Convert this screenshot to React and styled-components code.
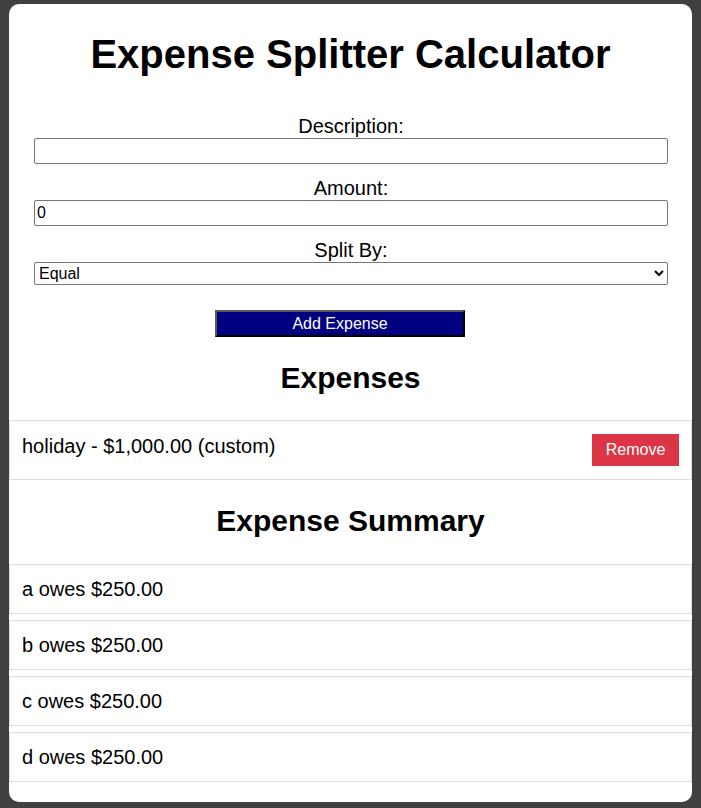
import React, { useState } from "react";
import styled, { createGlobalStyle } from "styled-components";

const GlobalStyle = createGlobalStyle`
  html, body {
    margin: 0;
    padding: 0;
    background: #404040;
    font-family: "Liberation Sans", Arial, sans-serif;
  }
  #root {
    padding: 4px 9px 5px;
  }
`;

const Card = styled.div`
  background: #fff;
  border-radius: 10px;
  padding: 27px 0 20px;
  color: #000;
`;

const Title = styled.h1`
  margin: 0;
  font-size: 40px;
  line-height: 46px;
  font-weight: bold;
  text-align: center;
`;

const Form = styled.form`
  margin: 37px 0 0;
  padding: 0 24px 0 25px;
  display: flex;
  flex-direction: column;
  align-items: stretch;
`;

const Label = styled.label`
  display: block;
  text-align: center;
  font-size: 20px;
  line-height: 24px;
`;

const Input = styled.input`
  box-sizing: border-box;
  width: 100%;
  height: 26px;
  margin: 0 0 12px;
  padding: 0 2px;
  border: 1px solid #767676;
  border-radius: 2px;
  font-family: "Liberation Sans", Arial, sans-serif;
  font-size: 16px;
  color: #000;
  background: #fff;
`;

const Select = styled.select`
  box-sizing: border-box;
  width: 100%;
  height: 23px;
  margin: 0;
  border: 1px solid #767676;
  border-radius: 2px;
  font-family: "Liberation Sans", Arial, sans-serif;
  font-size: 16px;
  color: #000;
  background: #fff;
`;

const AddButton = styled.button`
  box-sizing: border-box;
  align-self: center;
  width: 250px;
  height: 27px;
  margin: 25px 0 0 -22px;
  padding: 0;
  background: #000080;
  color: #fff;
  font-family: "Liberation Sans", Arial, sans-serif;
  font-size: 16px;
  border-style: solid;
  border-width: 2px;
  border-color: #5a5a5a #000 #000 #5a5a5a;
  cursor: pointer;
`;

const SectionTitle = styled.h2`
  margin: ${(p) => p.$top}px 0 0;
  font-size: 30px;
  line-height: 34px;
  font-weight: bold;
  text-align: center;
`;

const List = styled.ul`
  list-style: none;
  margin: ${(p) => p.$top}px 0 0;
  padding: 0;
  display: flex;
  flex-direction: column;
  gap: 6px;
`;

const Row = styled.li`
  display: flex;
  justify-content: space-between;
  align-items: flex-start;
  padding: ${(p) => (p.$tall ? "13px 12px" : "12px 12px")};
  border: 1px solid #ddd;
  font-size: 20px;
  line-height: 24px;
`;

const RemoveButton = styled.button`
  width: 87px;
  height: 32px;
  padding: 0;
  border: none;
  background: #dc3545;
  color: #fff;
  font-family: "Liberation Sans", Arial, sans-serif;
  font-size: 16px;
  cursor: pointer;
`;

const fmt = (n) =>
  "$" + n.toLocaleString("en-US", { minimumFractionDigits: 2, maximumFractionDigits: 2 });

export default function App() {
  const [expenses, setExpenses] = useState([
    { description: "holiday", amount: 1000, split: "custom" },
  ]);
  const people = ["a", "b", "c", "d"];
  const total = expenses.reduce((s, e) => s + e.amount, 0);

  return (
    <>
      <GlobalStyle />
      <Card>
        <Title>Expense Splitter Calculator</Title>
        <Form onSubmit={(e) => e.preventDefault()}>
          <Label>Description:</Label>
          <Input type="text" defaultValue="" />
          <Label>Amount:</Label>
          <Input type="number" defaultValue="0" />
          <Label>Split By:</Label>
          <Select defaultValue="equal">
            <option value="equal">Equal</option>
            <option value="custom">Custom</option>
          </Select>
          <AddButton type="submit">Add Expense</AddButton>
        </Form>

        <SectionTitle $top={24}>Expenses</SectionTitle>
        <List $top={25}>
          {expenses.map((e, i) => (
            <Row key={i} $tall>
              <span>
                {e.description} - {fmt(e.amount)} ({e.split})
              </span>
              <RemoveButton
                onClick={() => setExpenses(expenses.filter((_, j) => j !== i))}
              >
                Remove
              </RemoveButton>
            </Row>
          ))}
        </List>

        <SectionTitle $top={24}>Expense Summary</SectionTitle>
        <List $top={26}>
          {people.map((p) => (
            <Row key={p}>
              {p} owes {fmt(total / people.length)}
            </Row>
          ))}
        </List>
      </Card>
    </>
  );
}
